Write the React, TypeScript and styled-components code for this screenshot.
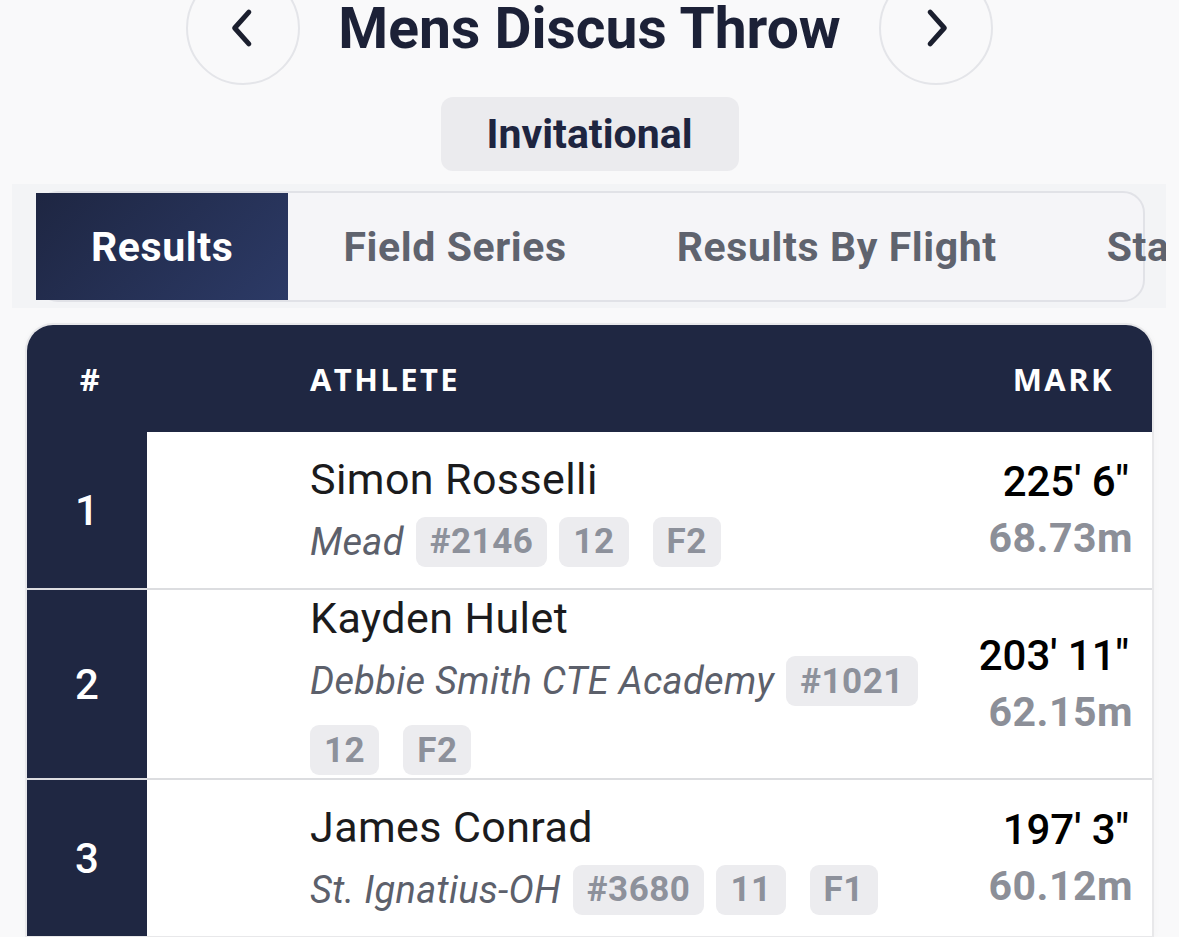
import React from "react";
import styled, { createGlobalStyle } from "styled-components";

const GlobalStyle = createGlobalStyle`
    html, body {
        margin: 0;
        padding: 0;
        background: #f9f9fa;
        font-family: Roboto, "Liberation Sans", sans-serif;
        overflow: hidden;
    }
`;

type Result = {
    place: number;
    name: string;
    school: string;
    bib: string;
    grade: string;
    flight: string;
    imperial: string;
    metric: string;
};

const RESULTS: Result[] = [
    { place: 1, name: "Simon Rosselli", school: "Mead", bib: "#2146", grade: "12", flight: "F2", imperial: "225' 6\"", metric: "68.73m" },
    { place: 2, name: "Kayden Hulet", school: "Debbie Smith CTE Academy", bib: "#1021", grade: "12", flight: "F2", imperial: "203' 11\"", metric: "62.15m" },
    { place: 3, name: "James Conrad", school: "St. Ignatius-OH", bib: "#3680", grade: "11", flight: "F1", imperial: "197' 3\"", metric: "60.12m" },
];

const TABS = ["Results", "Field Series", "Results By Flight", "Standings"];

const Page = styled.div`
    width: 1179px;
    height: 937px;
    overflow: hidden;
`;

const TitleRow = styled.div`
    display: flex;
    align-items: flex-start;
    justify-content: center;
    gap: 38px;
    height: 85px;
`;

const RoundButton = styled.button`
    width: 114px;
    height: 114px;
    margin-top: -29px;
    flex: none;
    border-radius: 50%;
    border: 2px solid #e4e5e9;
    background: transparent;
    display: flex;
    align-items: center;
    justify-content: center;
    padding: 0;
    color: #1b1f2e;
`;

const Title = styled.h1`
    margin: 0;
    font-size: 57px;
    font-weight: 700;
    color: #1c2137;
    line-height: 57px;
    white-space: nowrap;
`;

const Division = styled.div`
    margin: 12px auto 0;
    width: 298px;
    height: 74px;
    border-radius: 12px;
    background: #ebebee;
    color: #1e2540;
    font-size: 41px;
    font-weight: 700;
    display: flex;
    align-items: center;
    justify-content: center;
`;

const TabPanel = styled.div`
    margin: 13px 13px 0 12px;
    padding: 7px 21px 6px 24px;
    background: #f3f4f6;
    overflow: hidden;
`;

const TabBox = styled.div`
    height: 107px;
    border: 2px solid #e1e2e7;
    border-radius: 22px;
    background: #f5f5f8;
    box-sizing: content-box;
`;

const TabList = styled.div`
    display: flex;
    height: 100%;
    margin: 0 0 0 -2px;
    white-space: nowrap;
`;

const Tab = styled.div<{ $active?: boolean }>`
    display: flex;
    align-items: center;
    padding: 0 55px;
    height: 100%;
    font-size: 41px;
    font-weight: 700;
    letter-spacing: 0.6px;
    color: ${(p) => (p.$active ? "#ffffff" : "#5f636e")};
    background: ${(p) => (p.$active ? "linear-gradient(135deg, #1e2642 0%, #2c3a66 100%)" : "transparent")};
`;

const Card = styled.div`
    margin: 17px 27px 0 27px;
    border-radius: 26px 26px 0 0;
    overflow: hidden;
    background: #ffffff;
    box-shadow: 0 0 0 2px #e8e8ea, 0 2px 10px rgba(0, 0, 0, 0.05);
`;

const Grid = styled.div`
    display: grid;
    grid-template-columns: 120px 1fr 200px;
`;

const HeadCell = styled.div<{ $align?: string; $pad?: string }>`
    background: #1f2742;
    height: 107px;
    display: flex;
    align-items: center;
    justify-content: ${(p) => p.$align || "flex-start"};
    padding: ${(p) => p.$pad || "0"};
    color: #ffffff;
    font-family: "Open Sans", Roboto, sans-serif;
    font-size: 31px;
    font-weight: 700;
    letter-spacing: 2.4px;
`;

const Row = styled.div`
    display: contents;
`;

const RankCell = styled.div<{ $first?: boolean }>`
    background: #1f2742;
    min-height: 156px;
    display: flex;
    align-items: center;
    justify-content: center;
    color: #ffffff;
    font-size: 42px;
    font-weight: 500;
    border-top: ${(p) => (p.$first ? "none" : "2px solid #dcdde0")};
`;

const AthleteCell = styled.div<{ $first?: boolean }>`
    padding: 4px 10px 3px 163px;
    display: flex;
    flex-direction: column;
    justify-content: center;
    gap: 14px;
    border-top: ${(p) => (p.$first ? "none" : "2px solid #dcdde0")};
`;

const Name = styled.div`
    font-size: 43px;
    line-height: 48px;
    color: #1b1b1d;
    letter-spacing: 0.4px;
`;

const Meta = styled.div`
    display: flex;
    flex-wrap: wrap;
    align-items: center;
    row-gap: 19px;
    column-gap: 12px;
`;

const School = styled.span`
    font-size: 38px;
    font-style: italic;
    color: #5c606b;
    letter-spacing: 0.3px;
`;

const Tag = styled.span<{ $flight?: boolean }>`
    display: inline-flex;
    align-items: center;
    height: 50px;
    padding: 0 14px;
    border-radius: 9px;
    background: #ececef;
    color: #8d919b;
    font-size: 35px;
    font-weight: 700;
    letter-spacing: 0.5px;
    margin-left: ${(p) => (p.$flight ? "12px" : "0")};
`;

const MarkCell = styled.div<{ $first?: boolean }>`
    display: flex;
    flex-direction: column;
    align-items: flex-end;
    justify-content: center;
    padding-right: 19px;
    gap: 8px;
    border-top: ${(p) => (p.$first ? "none" : "2px solid #dcdde0")};
`;

const Imperial = styled.div`
    font-size: 42px;
    font-weight: 500;
    color: #000000;
    line-height: 48px;
    margin-right: 4px;
`;

const Metric = styled.div`
    font-size: 41px;
    font-weight: 700;
    color: #8c8f98;
    line-height: 48px;
    letter-spacing: 0.5px;
`;

function Chevron({ dir }: { dir: "left" | "right" }) {
    return (
        <svg width="40" height="40" viewBox="0 0 24 24" fill="none" stroke="#1b1f2e" strokeWidth="3" strokeLinecap="round" strokeLinejoin="round">
            {dir === "left" ? <path d="M15.5 2.5 L7 12 L15.5 21.5" /> : <path d="M8.5 2.5 L17 12 L8.5 21.5" />}
        </svg>
    );
}

export default function App() {
    return (
        <Page>
            <GlobalStyle />
            <TitleRow>
                <RoundButton aria-label="previous event">
                    <Chevron dir="left" />
                </RoundButton>
                <Title>Mens Discus Throw</Title>
                <RoundButton aria-label="next event">
                    <Chevron dir="right" />
                </RoundButton>
            </TitleRow>
            <Division>Invitational</Division>
            <TabPanel>
                <TabBox>
                    <TabList>
                        {TABS.map((t, i) => (
                            <Tab key={t} $active={i === 0}>
                                {t}
                            </Tab>
                        ))}
                    </TabList>
                </TabBox>
            </TabPanel>
            <Card>
                <Grid>
                    <HeadCell $align="center" $pad="0 0 0 8px">#</HeadCell>
                    <HeadCell $pad="0 0 0 163px">ATHLETE</HeadCell>
                    <HeadCell $align="flex-end" $pad="0 38px 0 0">MARK</HeadCell>
                    {RESULTS.map((r, i) => (
                        <Row key={r.place}>
                            <RankCell $first={i === 0}>{r.place}</RankCell>
                            <AthleteCell $first={i === 0}>
                                <Name>{r.name}</Name>
                                <Meta>
                                    <School>{r.school}</School>
                                    <Tag>{r.bib}</Tag>
                                    <Tag>{r.grade}</Tag>
                                    <Tag $flight>{r.flight}</Tag>
                                </Meta>
                            </AthleteCell>
                            <MarkCell $first={i === 0}>
                                <Imperial>{r.imperial}</Imperial>
                                <Metric>{r.metric}</Metric>
                            </MarkCell>
                        </Row>
                    ))}
                </Grid>
            </Card>
        </Page>
    );
}
